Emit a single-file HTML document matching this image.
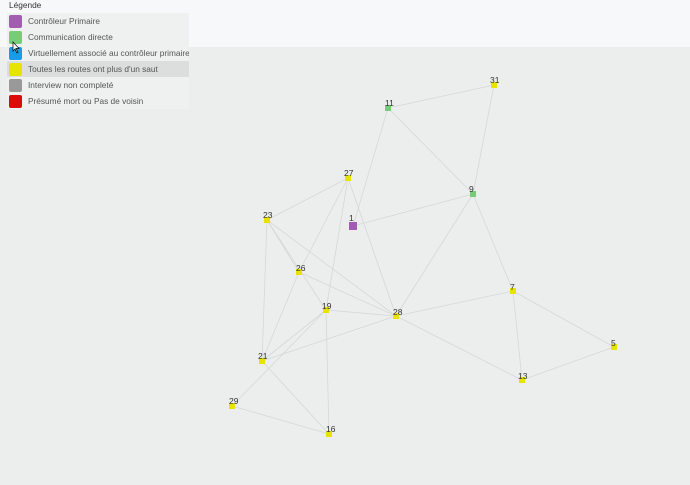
<!DOCTYPE html>
<html><head><meta charset="utf-8"><style>
body{margin:0;width:690px;height:485px;background:#eceeed;font-family:"Liberation Sans",sans-serif;overflow:hidden;position:relative}
.top{position:absolute;left:0;top:0;width:690px;height:47px;background:#f7f8f9}
.leg{position:absolute;left:0;top:0;width:189px}
.title{font-size:8.3px;color:#333;padding:0 0 0 9px;height:13px;line-height:11px;background:#f7f8f9}
.row{height:16px;display:flex;align-items:center;font-size:8.3px;color:#555;background:#eff0f0;margin-left:7px;white-space:nowrap;overflow:hidden}
.row.sel{background:#dcdddd}
.sw{width:13px;height:13px;border-radius:2px;margin:0 6px 0 2px;flex:none}
</style></head><body>
<div class="top"></div>
<div class="leg">
<div class="title">Légende</div>
<div class="row"><div class="sw" style="background:#a25db0"></div>Contrôleur Primaire</div>
<div class="row"><div class="sw" style="background:#77cc77"></div>Communication directe</div>
<div class="row"><div class="sw" style="background:#1a9be6"></div>Virtuellement associé au contrôleur primaire</div>
<div class="row sel"><div class="sw" style="background:#e5e500"></div>Toutes les routes ont plus d'un saut</div>
<div class="row"><div class="sw" style="background:#999"></div>Interview non completé</div>
<div class="row"><div class="sw" style="background:#dd0a0a"></div>Présumé mort ou Pas de voisin</div>
</div>
<svg width="690" height="485" style="position:absolute;left:0;top:0" font-family="Liberation Sans,sans-serif" font-size="8.5" fill="#333">
<g stroke="#d6d8d8" stroke-width="0.8">
<line x1="388" y1="108" x2="494" y2="85"/><line x1="388" y1="108" x2="473" y2="194"/><line x1="388" y1="108" x2="353" y2="226"/>
<line x1="494" y1="85" x2="473" y2="194"/><line x1="473" y1="194" x2="353" y2="226"/><line x1="473" y1="194" x2="396" y2="316"/>
<line x1="473" y1="194" x2="513" y2="291"/><line x1="513" y1="291" x2="396" y2="316"/><line x1="513" y1="291" x2="522" y2="380"/>
<line x1="513" y1="291" x2="614" y2="347"/><line x1="614" y1="347" x2="522" y2="380"/><line x1="396" y1="316" x2="522" y2="380"/>
<line x1="348" y1="178" x2="267" y2="220"/><line x1="348" y1="178" x2="299" y2="272"/><line x1="348" y1="178" x2="326" y2="310"/>
<line x1="348" y1="178" x2="396" y2="316"/><line x1="267" y1="220" x2="299" y2="272"/><line x1="267" y1="220" x2="396" y2="316"/>
<line x1="267" y1="220" x2="262" y2="361"/><line x1="267" y1="220" x2="326" y2="310"/><line x1="299" y1="272" x2="396" y2="316"/>
<line x1="299" y1="272" x2="262" y2="361"/><line x1="326" y1="310" x2="396" y2="316"/><line x1="326" y1="310" x2="262" y2="361"/>
<line x1="326" y1="310" x2="329" y2="434"/><line x1="326" y1="310" x2="232" y2="406"/><line x1="262" y1="361" x2="396" y2="316"/>
<line x1="262" y1="361" x2="329" y2="434"/><line x1="232" y1="406" x2="329" y2="434"/>
</g>
<rect x="349" y="222" width="8" height="8" fill="#a25db0"/><text x="349" y="221">1</text>
<g fill="#77cc77"><rect x="385" y="105" width="6" height="6"/><rect x="470" y="191" width="6" height="6"/></g>
<g fill="#e8e400">
<rect x="491" y="82" width="6" height="6"/><rect x="345" y="175" width="6" height="6"/><rect x="264" y="217" width="6" height="6"/>
<rect x="296" y="269" width="6" height="6"/><rect x="323" y="307" width="6" height="6"/><rect x="393" y="313" width="6" height="6"/>
<rect x="510" y="288" width="6" height="6"/><rect x="611" y="344" width="6" height="6"/><rect x="519" y="377" width="6" height="6"/>
<rect x="259" y="358" width="6" height="6"/><rect x="229" y="403" width="6" height="6"/><rect x="326" y="431" width="6" height="6"/>
</g>
<text x="385" y="106">11</text><text x="490" y="83">31</text><text x="469" y="192">9</text><text x="344" y="176">27</text>
<text x="263" y="218">23</text><text x="296" y="271">26</text><text x="322" y="309">19</text><text x="393" y="315">28</text>
<text x="510" y="290">7</text><text x="611" y="346">5</text><text x="518" y="379">13</text><text x="258" y="359">21</text>
<text x="229" y="404">29</text><text x="326" y="432">16</text>
<path d="M13 42 L13 51 L15 49 L17 53 L18 52.5 L16 48.5 L19 48.5 Z" fill="#fff" stroke="#000" stroke-width="0.7"/>
</svg>
</body></html>
